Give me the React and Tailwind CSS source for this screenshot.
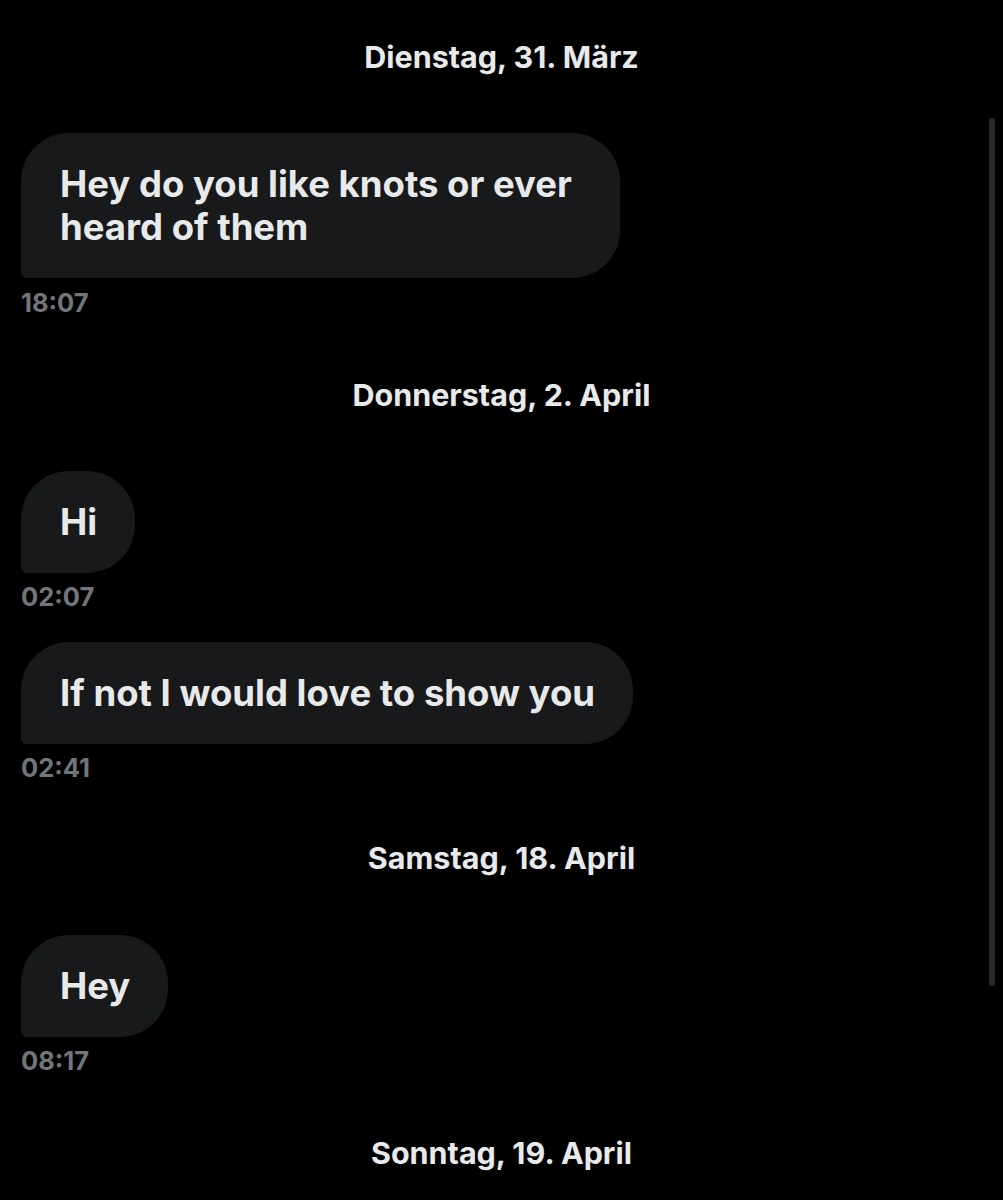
export default function App() {
  const font = { fontFamily: 'Inter, "Noto Sans", sans-serif' };
  const DateLabel = ({ children, className = "" }) => (
    <div className={`flex justify-center text-[30.5px] leading-[36px] font-bold text-[#e7e9ea] ${className}`}>{children}</div>
  );
  const Bubble = ({ children, time, className = "", timeClass = "mt-[12px]", widthClass = "max-w-[640px]" }) => (
    <div className={`flex flex-col items-start pl-[21px] ${className}`}>
      <div className={`bg-[#18191b] rounded-[48px] rounded-bl-[6px] pl-[39px] pr-[38px] pt-[30px] pb-[29px] text-[36.5px] leading-[43px] font-bold text-[#e7e9ea] whitespace-normal ${widthClass}`}>
        {children}
      </div>
      <div className={`${timeClass} text-[25.5px] leading-[24px] font-bold text-[#71767b]`}>{time}</div>
    </div>
  );
  return (
    <div className="relative w-[1003px] h-[1200px] bg-black overflow-hidden" style={font}>
      <div className="absolute right-[8px] top-[118px] w-[6px] h-[868px] rounded-full bg-[#2a2a2a]" />
      <div className="flex flex-col pt-[39px]">
        <DateLabel>Dienstag, 31. März</DateLabel>
        <Bubble time="18:07" className="mt-[58px]" timeClass="mt-[13px]" widthClass="w-[599px]">Hey do you like knots or ever heard of them</Bubble>
        <DateLabel className="mt-[62px]">Donnerstag, 2. April</DateLabel>
        <Bubble time="02:07" className="mt-[58px]">Hi</Bubble>
        <Bubble time="02:41" className="mt-[33px]" widthClass="whitespace-nowrap">If not I would love to show you</Bubble>
        <DateLabel className="mt-[60px]">Samstag, 18. April</DateLabel>
        <Bubble time="08:17" className="mt-[59px]">Hey</Bubble>
        <DateLabel className="mt-[62px]">Sonntag, 19. April</DateLabel>
      </div>
    </div>
  );
}
